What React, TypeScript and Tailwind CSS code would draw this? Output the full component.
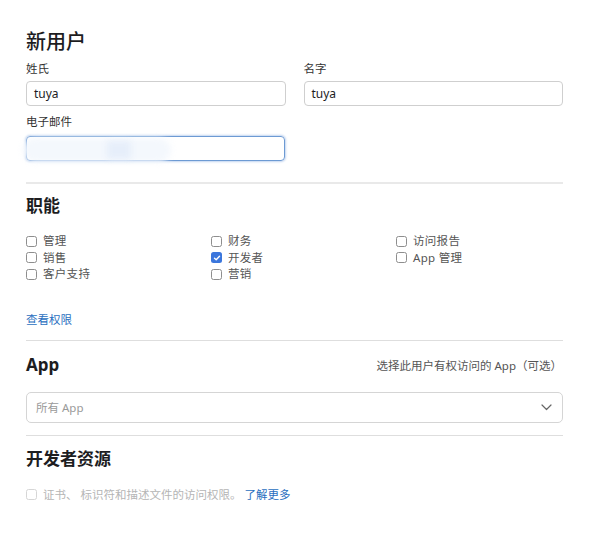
import React from "react";

const font = { fontFamily: '"Noto Sans", "Noto Sans CJK SC", sans-serif' };

function Box({ checked = false, disabled = false }: { checked?: boolean; disabled?: boolean }) {
  if (checked) {
    return (
      <span className="w-[11px] h-[11px] rounded-[2.5px] bg-[#3b76dc] flex items-center justify-center shrink-0">
        <svg width="8" height="8" viewBox="0 0 8 8" fill="none">
          <path d="M1.5 4.2L3.2 5.8L6.5 2.2" stroke="white" strokeWidth="1.4" strokeLinecap="round" strokeLinejoin="round" />
        </svg>
      </span>
    );
  }
  return (
    <span
      className={
        disabled
          ? "w-[11px] h-[11px] rounded-[2.5px] border border-[#d6d6d6] bg-white shrink-0"
          : "w-[11px] h-[11px] rounded-[2.5px] border border-[#8e8e8e] bg-white shrink-0"
      }
    />
  );
}

function Check({ label, checked = false }: { label: string; checked?: boolean }) {
  return (
    <div className="flex items-center h-[16.5px]">
      <Box checked={checked} />
      <span className="ml-[6px] text-[11.5px] leading-[16px] tracking-[0.3px] text-[#555]">{label}</span>
    </div>
  );
}

export default function App() {
  return (
    <div className="w-[589px] h-[538px] bg-white px-[26px] pt-[28px] text-[#1d1d1f]" style={font}>
      <h1 className="text-[20px] leading-[28px] font-medium text-[#1d1d1f]">新用户</h1>

      <div className="grid grid-cols-2 gap-x-[18px] mt-[5px]">
        <div>
          <div className="text-[11.5px] leading-[16px] text-[#333]">姓氏</div>
          <div className="mt-[4px] h-[25px] rounded-[4px] border border-[#cfcfcf] flex items-center px-[7px] text-[12px] text-[#1d1d1f]">
            tuya
          </div>
        </div>
        <div>
          <div className="text-[11.5px] leading-[16px] text-[#333]">名字</div>
          <div className="mt-[4px] h-[25px] rounded-[4px] border border-[#cfcfcf] flex items-center px-[7px] text-[12px] text-[#1d1d1f]">
            tuya
          </div>
        </div>
      </div>

      <div className="mt-[8px] text-[11.5px] leading-[16px] text-[#333]">电子邮件</div>
      <div className="relative mt-[6px] w-[259px] h-[25px] rounded-[4px] border-[1.5px] border-[#6d9ad3] shadow-[0_0_2px_1px_rgba(120,160,220,0.45)]">
        <div className="absolute left-[-4px] top-[1px] w-[148px] h-[24px] bg-[#f4f8fd] blur-[3px] rounded-full" />
        <div className="absolute left-[80px] top-[4px] w-[24px] h-[18px] bg-[#e6eefa] blur-[3px]" />
      </div>

      <div className="mt-[21px] h-[2px] bg-[#e9e9e9]" />

      <h2 className="mt-[10px] text-[17px] leading-[24px] font-semibold text-[#1d1d1f]">职能</h2>
      <div className="mt-[15px] grid grid-cols-[185px_185px_1fr]">
        <div>
          <Check label="管理" />
          <Check label="销售" />
          <Check label="客户支持" />
        </div>
        <div>
          <Check label="财务" />
          <Check label="开发者" checked />
          <Check label="营销" />
        </div>
        <div>
          <Check label="访问报告" />
          <Check label="App 管理" />
        </div>
      </div>

      <div className="mt-[29px] text-[11.5px] leading-[16px] text-[#2a6fc0]">查看权限</div>

      <div className="mt-[12px] h-px bg-[#dedede]" />

      <div className="mt-[12px] flex items-center justify-between">
        <h2 className="text-[17px] leading-[24px] font-bold text-[#1d1d1f]">App</h2>
        <span className="mr-[1px] mt-[3px] text-[11.5px] leading-[16px] text-[#555]">选择此用户有权访问的 App（可选）</span>
      </div>

      <div className="mt-[15px] h-[31px] rounded-[5px] border border-[#d5d5d5] flex items-center justify-between pl-[9px] pr-[10px]">
        <span className="text-[11.5px] text-[#9a9a9a] mt-[2px]">所有 App</span>
        <svg width="11" height="7" viewBox="0 0 11 7" fill="none">
          <path d="M1 1L5.5 5.5L10 1" stroke="#666" strokeWidth="1.2" strokeLinecap="round" strokeLinejoin="round" />
        </svg>
      </div>

      <div className="mt-[12px] h-px bg-[#dedede]" />

      <h2 className="mt-[11px] text-[17px] leading-[24px] font-semibold text-[#1d1d1f]">开发者资源</h2>
      <div className="mt-[16px] flex items-center h-[16px]">
        <Box disabled />
        <span className="ml-[6px] text-[11.5px] leading-[16px] text-[#b5b5b5]">证书、 标识符和描述文件的访问权限。</span>
        <span className="ml-[3px] text-[11.5px] leading-[16px] text-[#2a6fc0]">了解更多</span>
      </div>
    </div>
  );
}
